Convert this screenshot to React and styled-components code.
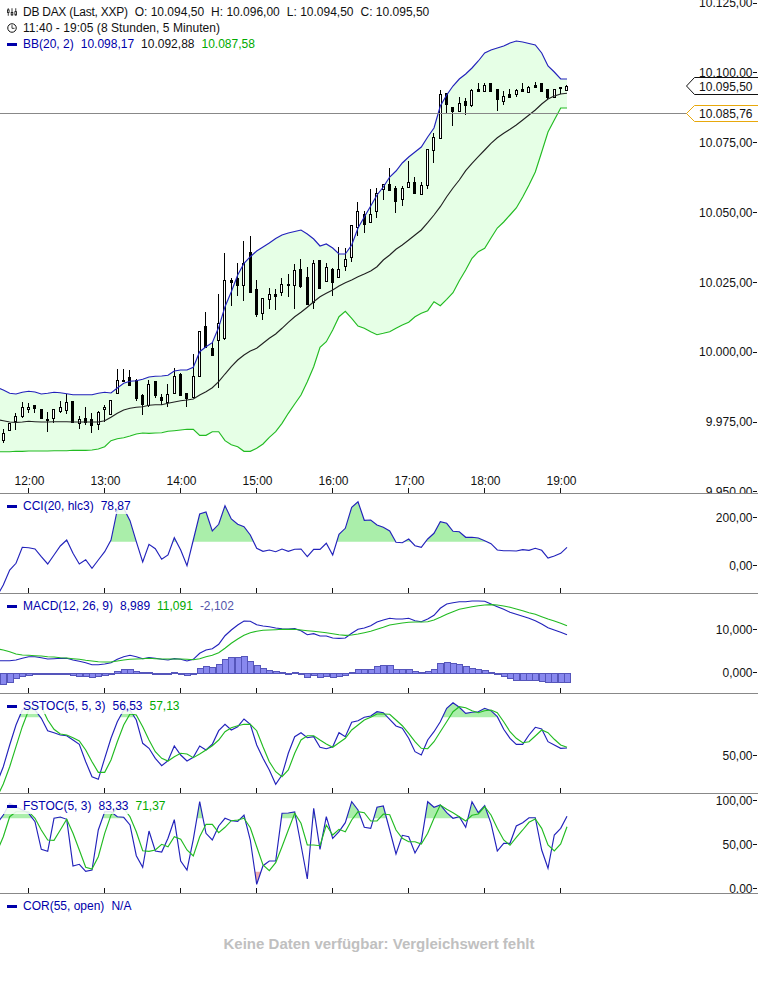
import React from "react";
import styled, { createGlobalStyle } from "styled-components";

const WIDTH = 758;
const BAR_STEP = 76 / 12;
const barX = (i) => 3.33 + BAR_STEP * i;
const HOURS = [
  ["12:00", 28.5],
  ["13:00", 104.5],
  ["14:00", 180.5],
  ["15:00", 256.5],
  ["16:00", 332.5],
  ["17:00", 408.5],
  ["18:00", 484.5],
  ["19:00", 560.5],
];

// series were read off 3x crops, so values are thirds of a pixel from the crop top
const fromCrop = (top, values) => values.map((v) => top + v / 3);

// wick top, wick bottom, body top, body bottom, rising
const candlesLow = [
  [538, 578, 548, 568, 1], [518, 538, 518, 538, 1], [490, 540, 498, 512, 1], [457, 505, 472, 498, 1], [460, 490, 471, 477, 1],
  [465, 490, 466, 476, 0], [478, 505, 478, 505, 0], [487, 545, 507, 509, 0], [477, 518, 478, 505, 1], [452, 490, 472, 485, 1],
  [432, 493, 456, 480, 1], [452, 518, 453, 516, 0], [498, 537, 508, 520, 1], [472, 526, 505, 518, 0], [490, 548, 508, 526, 0],
  [483, 540, 485, 520, 1], [465, 515, 472, 478, 1], [451, 493, 451, 493, 1], [356, 430, 391, 430, 1], [357, 395, 391, 395, 0],
  [360, 403, 380, 403, 0], [388, 452, 391, 444, 0], [433, 495, 436, 464, 0], [390, 472, 403, 466, 1], [393, 443, 394, 436, 0],
  [433, 464, 442, 452, 0], [403, 470, 433, 458, 1], [355, 432, 379, 431, 1], [370, 436, 372, 434, 0], [430, 470, 430, 445, 0],
  [312, 445, 379, 442, 1], [243, 380, 243, 379, 1], [187, 293, 229, 292, 0], [276, 315, 294, 315, 0], [132, 413, 220, 272, 1],
  [10, 270, 91, 264, 1], [85, 167, 91, 98, 0], [40, 137, 85, 105, 0], [-27, 152, 40, 107, 1], [-42, 125, 6, 125, 0],
  [90, 200, 118, 192, 0], [145, 210, 145, 190, 1], [113, 178, 133, 149, 1], [118, 180, 132, 137, 0], [85, 138, 103, 128, 1],
  [72, 140, 101, 105, 0], [43, 177, 60, 105, 1], [27, 115, 57, 107, 0], [50, 162, 81, 162, 0], [30, 177, 40, 157, 1],
  [30, 113, 30, 113, 0], [38, 95, 52, 95, 1], [55, 137, 57, 95, 0], [-9, 82, 58, 82, 1], [-6, 62, 28, 50, 1],
].map(([a, b, c, d, up]) => [250 + a / 3, 250 + b / 3, 250 + c / 3, 250 + d / 3, up]);

const candlesHigh = [
  [225, 262, 225, 257, 1], [202, 236, 211, 227, 1], [211, 233, 214, 224, 0], [189, 222, 214, 222, 1], [188, 218, 193, 211, 1],
  [184, 200, 184, 189, 1], [168, 190, 184, 190, 0], [186, 213, 188, 201, 0], [186, 206, 188, 199, 1], [161, 187, 182, 187, 1],
  [177, 194, 182, 193, 0], [182, 194, 185, 194, 1], [149, 189, 149, 185, 1], [133, 163, 137, 150, 1], [90, 139, 94, 138, 1],
  [93, 113, 93, 104, 0], [107, 126, 107, 111, 0], [97, 111, 103, 111, 1], [98, 115, 101, 105, 0], [89, 107, 90, 105, 1],
  [83, 91, 89, 91, 0], [83, 91, 85, 91, 1], [83, 91, 83, 91, 0], [89, 111, 89, 99, 0], [91, 105, 96, 101, 1],
  [89, 97, 94, 97, 0], [89, 97, 90, 94, 1], [83, 91, 89, 91, 0], [86, 92, 87, 92, 1], [82, 87, 85, 87, 0],
  [83, 91, 83, 91, 0], [89, 99, 89, 97, 0], [89, 97, 89, 97, 1], [87, 94, 87, 88, 0], [85, 91, 86, 90, 1],
];
const candles = [...candlesLow, ...candlesHigh];

const bandUpper = [
  390, 393.3, 394, 392.3, 391.3, 392, 394, 393.3, 392.3, 392.7,
  393.7, 394.7, 394.7, 394.7, 394.7, 393.3, 392.3, 393, 388, 383.3,
  381.3, 380.7, 379.3, 377, 376.3, 376, 375.3, 371, 370, 370,
  367.3, 351.7, 346.7, 342.7, 327.3, 306.7, 291.7, 275, 263.3, 256.7,
  251, 247, 243, 238.5, 235, 233, 231.5, 230, 234, 239,
  246, 244, 248, 254, 254, 245, 228, 217, 206, 195,
  187, 177, 171, 163, 157, 152, 147, 137, 128, 106,
  95, 86, 79, 74, 68, 61, 53, 50, 48, 46,
  43, 41, 42, 43.5, 45, 53, 66, 72, 79, 79,
];
const bandMiddle = fromCrop(250, [
  512, 516, 517, 516, 514, 515, 516, 516, 515, 515,
  515, 516, 516, 516, 516, 516, 512, 502, 490, 480,
  475, 472, 470, 466, 464, 464, 460, 456, 452, 450,
  447, 435, 425, 413, 395, 372, 350, 330, 315, 303,
  295, 280, 265, 252, 235, 217, 200, 187, 172, 155,
  140, 130, 120, 108, 98, 90, 80, 72, 63, 50,
  30, 15, -2, -15, -30, -45, -60, -82, -105, -130,
  -160, -186, -210, -238, -260, -280, -300, -320, -337, -350,
  -362, -375, -390, -405, -420, -438, -453, -462, -468, -470,
]);
const bandLower = fromCrop(250, [
  605, 605, 604, 604, 603, 603, 603, 603, 602, 602,
  602, 601, 601, 601, 600, 597, 590, 572, 566, 563,
  558, 552, 549, 550, 549, 548, 544, 542, 540, 538,
  538, 556, 556, 545, 545, 572, 584, 590, 604, 604,
  595, 582, 562, 545, 520, 490, 462, 435, 395, 350,
  292, 275, 240, 200, 184, 205, 228, 235, 245, 254,
  250, 245, 235, 225, 217, 200, 190, 182, 155, 167,
  148, 128, 92, 60, 25, 5, -5, -36, -66, -84,
  -105, -126, -159, -195, -234, -294, -354, -390, -426, -426,
]);

const cci = fromCrop(490, [
  285, 240, 220, 172, 173, 177, 200, 222, 195, 168,
  150, 190, 222, 209, 235, 210, 185, 150, 60, 55,
  92, 155, 216, 163, 176, 208, 195, 143, 180, 227,
  150, 72, 66, 123, 103, 47, 87, 103, 110, 135,
  175, 184, 180, 185, 177, 184, 178, 177, 200, 178,
  178, 160, 195, 133, 115, 52, 35, 91, 90, 105,
  112, 123, 157, 158, 147, 167, 172, 147, 130, 95,
  100, 124, 125, 142, 142, 144, 152, 161, 180, 182,
  182, 183, 179, 181, 175, 181, 204, 198, 190, 172,
]);
const macdLine = fromCrop(490, [
  512, 512, 510, 505, 500, 500, 503, 507, 506, 505,
  505, 510, 514, 518, 524, 524, 522, 518, 508, 500,
  496, 500, 506, 503, 505, 508, 510, 506, 508, 513,
  508, 490, 480, 476, 463, 437, 420, 405, 393, 394,
  404, 408, 410, 414, 416, 417, 416, 422, 434, 431,
  438, 438, 444, 445, 444, 430, 418, 414, 407, 396,
  390, 385, 387, 387, 385, 392, 395, 387, 376, 355,
  342, 338, 335, 335, 333, 333, 334, 342, 350, 358,
  367, 373, 379, 385, 392, 402, 413, 420, 427, 434,
]);
const macdSignal = fromCrop(490, [
  480, 485, 492, 495, 496, 497, 498, 500, 501, 503,
  504, 506, 508, 511, 513, 515, 516, 516, 513, 510,
  508, 507, 506, 505, 506, 507, 507, 507, 507, 508,
  509, 506, 500, 496, 488, 475, 460, 447, 436, 428,
  424, 421, 420, 419, 418, 418, 418, 420, 422, 424,
  426, 428, 431, 434, 436, 435, 432, 428, 424, 418,
  412, 405, 402, 399, 397, 396, 396, 395, 390, 382,
  373, 365, 358, 354, 350, 347, 345, 344, 345, 348,
  352, 357, 362, 368, 373, 380, 387, 393, 400, 407,
]);
const macdHist = fromCrop(490, [
  583, 577, 565, 558, 554, 550, 553, 553, 553, 551,
  550, 555, 558, 558, 561, 559, 556, 552, 544, 538,
  538, 542, 547, 547, 548, 551, 551, 547, 550, 555,
  550, 535, 529, 532, 523, 508, 502, 502, 499, 512,
  526, 535, 540, 544, 547, 549, 547, 550, 562, 556,
  561, 558, 561, 558, 555, 547, 536, 536, 536, 529,
  526, 526, 536, 536, 538, 544, 547, 542, 536, 520,
  517, 520, 523, 529, 533, 536, 539, 545, 552, 558,
  565, 569, 571, 571, 571, 574, 577, 577, 577, 577,
]);
const sstocK = fromCrop(690, [
  230, 165, 105, 60, 50, 60, 85, 122, 128, 135,
  137, 150, 163, 215, 260, 268, 205, 145, 95, 60,
  60, 90, 160, 175, 205, 227, 212, 168, 195, 213,
  202, 168, 180, 163, 122, 103, 120, 110, 87, 103,
  165, 205, 240, 283, 255, 190, 140, 128, 143, 140,
  172, 176, 170, 128, 140, 97, 92, 82, 78, 65,
  68, 88, 108, 115, 145, 185, 195, 150, 125, 95,
  55, 38, 52, 70, 67, 65, 55, 62, 80, 118,
  145, 163, 163, 135, 112, 117, 155, 165, 175, 174,
]);
const sstocD = fromCrop(690, [
  282, 230, 170, 110, 60, 55, 50, 90, 118, 132,
  135, 143, 153, 180, 215, 247, 247, 210, 155, 105,
  72, 75, 110, 150, 185, 205, 213, 200, 190, 192,
  203, 192, 180, 167, 150, 125, 113, 107, 103, 103,
  122, 170, 215, 245, 260, 240, 190, 150, 137, 137,
  150, 162, 172, 158, 145, 120, 105, 90, 82, 72,
  72, 73, 90, 107, 130, 155, 175, 176, 155, 125,
  95, 65, 50, 53, 62, 68, 62, 60, 68, 95,
  125, 145, 158, 155, 138, 120, 128, 148, 165, 172,
]);
const fstocK = fromCrop(690, [
  375, 340, 350, 360, 370, 395, 478, 484, 385, 381,
  388, 528, 523, 544, 540, 420, 365, 365, 380, 382,
  405, 497, 532, 423, 483, 486, 445, 389, 513, 540,
  448, 335, 430, 450, 408, 385, 392, 394, 375, 450,
  583, 527, 513, 513, 370, 369, 366, 465, 567, 355,
  478, 380, 445, 425, 398, 335, 360, 412, 415, 352,
  348, 420, 492, 436, 440, 489, 455, 335, 352, 345,
  368, 385, 380, 412, 335, 368, 347, 400, 483, 460,
  460, 408, 398, 383, 383, 480, 535, 435, 415, 379,
]);
const fstocD = fromCrop(690, [
  440, 380, 365, 365, 365, 385, 420, 450, 451, 420,
  388, 430, 480, 532, 537, 500, 430, 375, 355, 355,
  380, 425, 482, 484, 480, 463, 470, 440, 448, 480,
  498, 440, 403, 403, 428, 412, 392, 390, 385, 413,
  470, 525, 542, 518, 470, 420, 370, 400, 465, 465,
  467, 405, 435, 418, 425, 390, 365, 368, 393, 393,
  372, 374, 420, 445, 455, 455, 462, 430, 385, 345,
  358, 368, 380, 393, 376, 372, 350, 375, 415, 450,
  466, 442, 420, 397, 387, 415, 465, 483, 462, 410,
]);

// one extra point left of the first bar so lines run off the edge of the plot
const seriesPoints = (values) => [
  [barX(-1), values[0] + (values[0] - values[1]) * 0.75],
  ...values.map((y, i) => [barX(i), y]),
];
const toPath = (points) => points.map(([x, y]) => `${x.toFixed(1)},${y.toFixed(1)}`).join(" ");

// split a series into closed areas on one side of a horizontal level
const levelAreas = (points, level, above) => {
  const inside = (y) => (above ? y < level : y > level);
  const areas = [];
  let current = null;
  points.forEach(([x, y], i) => {
    if (i > 0) {
      const [px, py] = points[i - 1];
      if (inside(py) !== inside(y)) {
        const cx = px + ((level - py) / (y - py)) * (x - px);
        if (current) {
          current.push([cx, level]);
          areas.push(current);
          current = null;
        } else {
          current = [[cx, level]];
        }
      }
    }
    if (inside(y)) {
      if (!current) current = [[x, level]];
      current.push([x, y]);
    }
  });
  if (current) {
    current.push([points[points.length - 1][0], level]);
    areas.push(current);
  }
  return areas;
};

const GlobalStyle = createGlobalStyle`
  html, body {
    margin: 0;
    padding: 0;
    background: #fff;
    font-family: "Liberation Sans", Arial, sans-serif;
  }
`;

const Page = styled.div`
  width: ${WIDTH}px;
  height: 100vh;
  display: flex;
  flex-direction: column;
  overflow: hidden;
  background: #fff;
`;

const Panel = styled.section`
  position: relative;
  flex: none;
  height: ${(p) => p.$height}px;
  border-bottom: 1px solid #888;
  box-sizing: border-box;
`;

const EmptyPanel = styled.section`
  position: relative;
  flex: 1;
  display: flex;
  align-items: center;
  justify-content: center;
`;

const NoData = styled.div`
  font-size: 15px;
  font-weight: 700;
  color: #c0c0c0;
`;

const Chart = styled.svg`
  display: block;
`;

const Legend = styled.div`
  position: absolute;
  top: 4px;
  left: 3px;
  display: flex;
  flex-direction: column;
  font-size: 12px;
  line-height: 16px;
`;

const LegendRow = styled.div`
  display: flex;
  align-items: center;
  gap: 7px;
  padding: 0 4px;
  background: ${(p) => (p.$veil ? "rgba(255, 255, 255, 0.85)" : "transparent")};
`;

const Slot = styled.span`
  flex: none;
  width: 10px;
  margin-right: -1px;
  display: flex;
  align-items: center;
  justify-content: center;
`;

const Marker = styled.span`
  display: block;
  width: 10px;
  height: 3px;
  background: #0000aa;
`;

const Value = styled.span`
  color: ${(p) => p.$color || "#111"};
  letter-spacing: ${(p) => p.$spacing || "0"};
  white-space: nowrap;
`;

const AxisLabel = styled.text`
  font-family: "Liberation Sans", Arial, sans-serif;
  font-size: 12px;
  fill: #111;
  text-anchor: ${(p) => p.$anchor || "end"};
`;

const PlotLine = styled.polyline`
  fill: none;
  stroke: ${(p) => p.$color};
  stroke-width: 1.15;
`;

const TagOutline = styled.polyline`
  fill: #fff;
  stroke: ${(p) => p.$color};
  stroke-width: 1;
`;

const BLUE = "#2222bb";
const GREEN = "#22bb22";
const TEXT_BLUE = "#0000aa";
const TEXT_GREEN = "#00aa00";

function CandleIcon() {
  return (
    <svg width="12" height="12" viewBox="0 0 12 12">
      <path d="M1.5 1.5v9M6 1.5v9M10.5 1.5v9" stroke="#111" fill="none" />
      <rect x="0.5" y="3.5" width="2" height="3" fill="#fff" stroke="#111" />
      <rect x="5" y="6.5" width="2" height="3" fill="#fff" stroke="#111" />
      <rect x="9.5" y="5.5" width="2" height="4" fill="#fff" stroke="#111" />
    </svg>
  );
}

function ClockIcon() {
  return (
    <svg width="12" height="12" viewBox="0 0 12 12">
      <circle cx="6" cy="6" r="5.1" fill="none" stroke="#111" strokeWidth="1.2" />
      <path d="M6 2.6V6.4H9" fill="none" stroke="#111" />
    </svg>
  );
}

function ScaleLabels({ labels }) {
  return labels.map(([text, y]) => (
    <g key={text}>
      <AxisLabel x={752.5} y={y + 4.4}>
        {text}
      </AxisLabel>
      <line x1={753} x2={757} y1={Math.floor(y) + 0.5} y2={Math.floor(y) + 0.5} stroke="#111" />
    </g>
  ));
}

function HourTicks({ bottom }) {
  return HOURS.map(([label, x]) => (
    <line key={label} x1={x} x2={x} y1={bottom - 5} y2={bottom} stroke="#111" />
  ));
}

function LevelFill({ values, level, above = true, color }) {
  return levelAreas(seriesPoints(values), level, above).map((area, i) => (
    <polygon key={i} points={toPath(area)} fill={color} />
  ));
}

function Candle({ index, data }) {
  const [wickTop, wickBottom, bodyTop, bodyBottom, rising] = data;
  const x = Math.floor(barX(index)) + 0.5;
  const top = Math.round(bodyTop) + 0.5;
  const height = Math.max(1, Math.round(bodyBottom - bodyTop));
  return (
    <g shapeRendering="crispEdges">
      <line x1={x} x2={x} y1={wickTop} y2={wickBottom} stroke="#000" />
      <rect x={x - 1} y={top} width={2} height={height} fill={rising ? "#fff" : "#000"} stroke="#000" />
    </g>
  );
}

function PriceTag({ top, bottom, color, text }) {
  const y = (top + bottom) / 2;
  return (
    <>
      <TagOutline
        points={`758,${top} 694.5,${top} 686.5,${y} 694.5,${bottom} 758,${bottom}`}
        $color={color}
      />
      <AxisLabel x={752.5} y={y + 4.9}>
        {text}
      </AxisLabel>
    </>
  );
}

function MainChart() {
  const upper = seriesPoints(bandUpper);
  const lower = seriesPoints(bandLower);
  return (
    <Chart width={WIDTH} height={493} viewBox={`0 0 ${WIDTH} 493`}>
      <polygon points={toPath([...upper, ...[...lower].reverse()])} fill="#e6ffe6" />
      {candles.map((c, i) => (
        <Candle key={i} index={i} data={c} />
      ))}
      <PlotLine points={toPath(upper)} $color={BLUE} />
      <PlotLine points={toPath(seriesPoints(bandMiddle))} $color="#222" />
      <PlotLine points={toPath(lower)} $color={GREEN} />
      <line x1={0} x2={687} y1={113.5} y2={113.5} stroke="#888" />
      <ScaleLabels
        labels={[
          ["10.125,00", 3],
          ["10.100,00", 72.7],
          ["10.075,00", 142.7],
          ["10.050,00", 212.7],
          ["10.025,00", 282.3],
          ["10.000,00", 352],
          ["9.975,00", 422],
          ["9.950,00", 491.5],
        ]}
      />
      <PriceTag top={77.5} bottom={94.5} color="#111" text="10.095,50" />
      <PriceTag top={105.5} bottom={121.5} color="#e8a80c" text="10.085,76" />
      {HOURS.map(([label, x]) => (
        <AxisLabel key={label} x={x + 1} y={485} $anchor="middle">
          {label}
        </AxisLabel>
      ))}
      <HourTicks bottom={493} />
    </Chart>
  );
}

function IndicatorChart({ top, children }) {
  return (
    <Chart width={WIDTH} height={99} viewBox={`0 ${top} ${WIDTH} 99`}>
      {children}
      <HourTicks bottom={top + 99} />
    </Chart>
  );
}

function IndicatorLegend({ label, values }) {
  return (
    <Legend>
      <LegendRow $veil>
        <Slot>
          <Marker />
        </Slot>
        <Value $color={TEXT_BLUE}>{label}</Value>
        {values.map(([text, color]) => (
          <Value key={text} $color={color}>
            {text}
          </Value>
        ))}
      </LegendRow>
    </Legend>
  );
}

function MacdBars() {
  const base = 673.5;
  return (
    <g shapeRendering="crispEdges">
      {macdHist.map((value, i) => {
        const y = Math.round(value) + 0.5;
        return (
          <rect
            key={i}
            x={Math.round(barX(i) - 3) + 0.5}
            y={Math.min(y, base)}
            width={6}
            height={Math.max(1, Math.abs(y - base))}
            fill="#8888ee"
            stroke="#5555bb"
          />
        );
      })}
    </g>
  );
}

export default function App() {
  return (
    <Page>
      <GlobalStyle />
      <Panel $height={494}>
        <MainChart />
        <Legend>
          <LegendRow>
            <Slot>
              <CandleIcon />
            </Slot>
            <Value $spacing="-0.26px">DB DAX (Last, XXP)</Value>
            <Value>O: 10.094,50</Value>
            <Value>H: 10.096,00</Value>
            <Value>L: 10.094,50</Value>
            <Value>C: 10.095,50</Value>
          </LegendRow>
          <LegendRow>
            <Slot>
              <ClockIcon />
            </Slot>
            <Value $spacing="0.05px">11:40 - 19:05 (8 Stunden, 5 Minuten)</Value>
          </LegendRow>
          <LegendRow>
            <Slot>
              <Marker />
            </Slot>
            <Value $color={TEXT_BLUE}>BB(20, 2)</Value>
            <Value $color={TEXT_BLUE}>10.098,17</Value>
            <Value>10.092,88</Value>
            <Value $color={TEXT_GREEN}>10.087,58</Value>
          </LegendRow>
        </Legend>
      </Panel>

      <Panel $height={100}>
        <IndicatorChart top={494}>
          <LevelFill values={cci} level={541.7} color="#aaeeaa" />
          <PlotLine points={toPath(seriesPoints(cci))} $color={BLUE} />
          <ScaleLabels
            labels={[
              ["200,00", 517.7],
              ["0,00", 565.7],
            ]}
          />
        </IndicatorChart>
        <IndicatorLegend label="CCI(20, hlc3)" values={[["78,87", TEXT_BLUE]]} />
      </Panel>

      <Panel $height={100}>
        <IndicatorChart top={594}>
          <MacdBars />
          <PlotLine points={toPath(seriesPoints(macdLine))} $color={BLUE} />
          <PlotLine points={toPath(seriesPoints(macdSignal))} $color={GREEN} />
          <ScaleLabels
            labels={[
              ["10,000", 629.3],
              ["0,000", 672.7],
            ]}
          />
        </IndicatorChart>
        <IndicatorLegend
          label="MACD(12, 26, 9)"
          values={[
            ["8,989", TEXT_BLUE],
            ["11,091", TEXT_GREEN],
            ["-2,102", "#5555aa"],
          ]}
        />
      </Panel>

      <Panel $height={100}>
        <IndicatorChart top={694}>
          <LevelFill values={sstocK} level={717.3} color="#aaeeaa" />
          <PlotLine points={toPath(seriesPoints(sstocK))} $color={BLUE} />
          <PlotLine points={toPath(seriesPoints(sstocD))} $color={GREEN} />
          <ScaleLabels labels={[["50,00", 755.7]]} />
        </IndicatorChart>
        <IndicatorLegend
          label="SSTOC(5, 5, 3)"
          values={[
            ["56,53", TEXT_BLUE],
            ["57,13", TEXT_GREEN],
          ]}
        />
      </Panel>

      <Panel $height={100}>
        <IndicatorChart top={794}>
          <LevelFill values={fstocK} level={818.3} color="#aaeeaa" />
          <LevelFill values={fstocK} level={871.7} above={false} color="#eeaaaa" />
          <PlotLine points={toPath(seriesPoints(fstocK))} $color={BLUE} />
          <PlotLine points={toPath(seriesPoints(fstocD))} $color={GREEN} />
          <ScaleLabels
            labels={[
              ["100,00", 800.7],
              ["50,00", 844.3],
              ["0,00", 888.7],
            ]}
          />
        </IndicatorChart>
        <IndicatorLegend
          label="FSTOC(5, 3)"
          values={[
            ["83,33", TEXT_BLUE],
            ["71,37", TEXT_GREEN],
          ]}
        />
      </Panel>

      <EmptyPanel>
        <IndicatorLegend label="COR(55, open)" values={[["N/A", TEXT_BLUE]]} />
        <NoData>Keine Daten verfügbar: Vergleichswert fehlt</NoData>
      </EmptyPanel>
    </Page>
  );
}
